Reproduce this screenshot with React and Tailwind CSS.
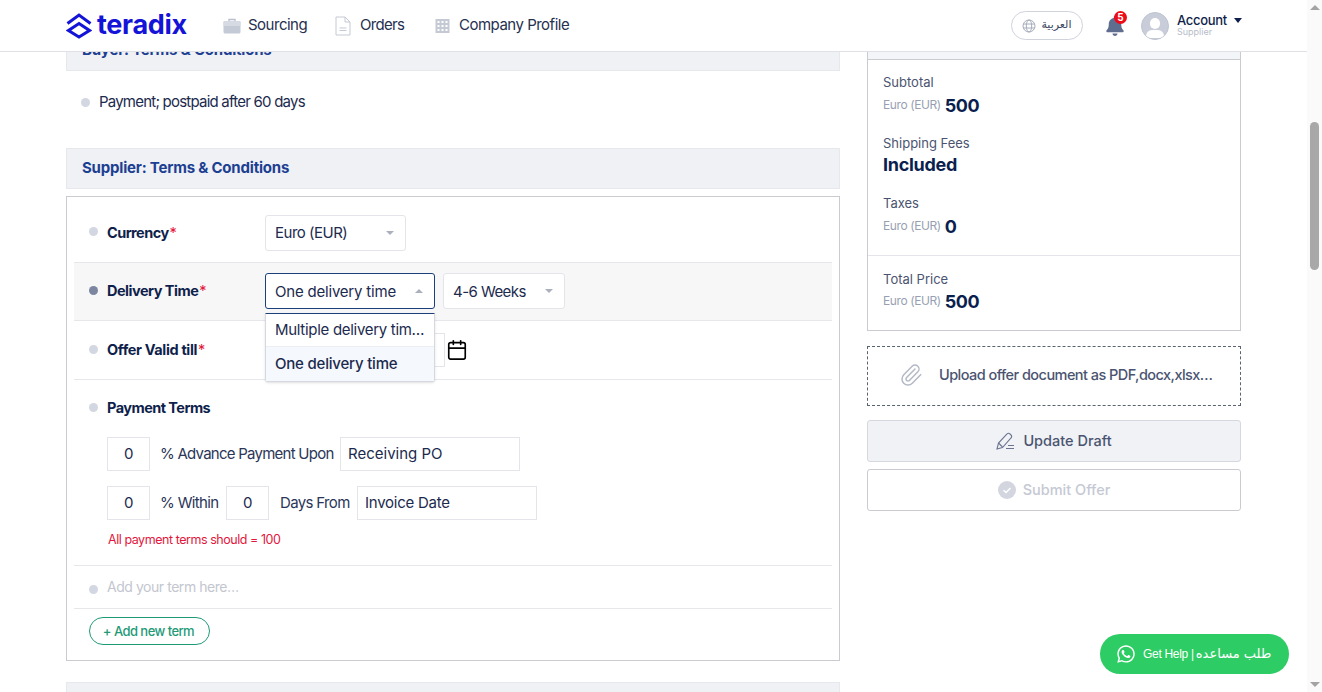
import { Calendar, Paperclip } from "lucide-react";
import { FaWhatsapp, FaBell } from "react-icons/fa";

const font = "font-['Inter','Noto_Sans',sans-serif]";

function Caret({ up }) {
  return (
    <span
      className={`w-0 h-0 border-x-[4px] border-x-transparent ${
        up ? "border-b-[4px] border-b-[#aab0bc]" : "border-t-[4px] border-t-[#aab0bc]"
      }`}
    />
  );
}

function Select({ value, className, up }) {
  return (
    <div className={`h-[36px] flex items-center justify-between pl-[9px] pr-[11px] bg-white rounded-[3px] border text-[15px] text-[#1c2a4e] ${className}`}>
      <span className="pt-[2px]">{value}</span>
      <Caret up={up} />
    </div>
  );
}

function Bullet({ active, className = "" }) {
  return <span className={`w-[9px] h-[9px] rounded-full shrink-0 ${active ? "bg-[#7d86a0]" : "bg-[#d3d7e1]"} ${className}`} />;
}

function Label({ children, required, className = "tracking-[-0.55px]" }) {
  return (
    <span className={`text-[14.5px] font-bold text-[#0f1f4b] ${className}`}>
      {children}
      {required && <span className="text-[#e3163c] font-normal ml-px">*</span>}
    </span>
  );
}

function Box({ value, className }) {
  return (
    <div className={`h-[34px] flex items-center pt-[1px] bg-white border border-[#e3e5ea] text-[15px] text-[#1c2a4e] ${className}`}>
      {value}
    </div>
  );
}

function PriceLine({ label, amount, tight }) {
  return (
    <div>
      <div className="text-[13px] leading-[18px] text-[#4a5470]">{label}</div>
      <div className={`flex items-center ${tight ? "h-[26px]" : "h-[28px]"}`}>
        <span className="text-[12px] text-[#989fb2] tracking-[-0.4px] mr-[4px]">Euro (EUR)</span>
        <span className="text-[18px] font-bold text-[#0b1f4f] tracking-[-0.5px]">{amount}</span>
      </div>
    </div>
  );
}

function Header() {
  return (
    <header className="absolute top-0 left-0 right-0 h-[52px] z-20 bg-white border-b border-[#dfe1e6] flex items-center pl-[66px] pr-[64px]">
      <svg width="26" height="26" viewBox="0 0 26 26" fill="none" stroke="#1414d8" strokeWidth="3" className="shrink-0">
        <path d="M1.500 10.500 13 2 24.500 10.500" />
        <path d="M13 10.500 23.500 17.500 13 24 2.500 17.500Z" />
      </svg>
      <span className="ml-[5px] text-[27px] leading-none font-bold text-[#1414d8] tracking-[-0.3px] w-[126px] -mt-[2px]">teradix</span>
      <nav className="flex items-center text-[15px] text-[#26304f] tracking-[-0.5px]">
        <svg width="18" height="16" viewBox="0 0 18 16" className="mr-[7px]">
          <path d="M6 3V1.500h6V3" fill="none" stroke="#b9bfcc" strokeWidth="1.400" />
          <rect x="0.500" y="3" width="17" height="12.500" rx="1.500" fill="#c4cad6" />
          <rect x="0.500" y="3" width="17" height="5" rx="1" fill="#d6dae3" />
        </svg>
        <span className="w-[87px]">Sourcing</span>
        <svg width="16" height="20" viewBox="0 0 16 20" fill="none" stroke="#c4c9d4" className="mr-[9px]">
          <path d="M1 1h9l5 5v13H1z" />
          <path d="M10 1v5h5M4.500 12h7M4.500 14.500h7" />
        </svg>
        <span className="w-[75px] tracking-[-0.7px]">Orders</span>
        <svg width="15" height="14" viewBox="0 0 15 14" fill="#c4c9d4" className="mr-[9px]">
          <path d="M0.500 0h14v14H0.500zM2.500 2v2h2V2zM6.500 2v2h2V2zM10.500 2v2h2V2zM2.500 6v2h2V6zM6.500 6v2h2V6zM10.500 6v2h2V6zM2.500 10v2h2v-2zM6.500 10v2h2v-2zM10.500 10v2h2v-2z" fillRule="evenodd" />
        </svg>
        <span>Company Profile</span>
      </nav>
      <div className="ml-auto flex items-center">
        <div className="w-[72px] h-[29px] rounded-full border border-[#cfd3dc] flex items-center justify-center gap-[5px] text-[12px] text-[#3b4560]">
          <svg width="14" height="14" viewBox="0 0 14 14" fill="none" stroke="#a5acbb">
            <circle cx="7" cy="7" r="6" />
            <ellipse cx="7" cy="7" rx="2.700" ry="6" />
            <path d="M1 5h12M1 9h12" />
          </svg>
          <span dir="rtl" className="font-['DejaVu_Sans',sans-serif] text-[11px]">العربية</span>
        </div>
        <div className="relative ml-[22px] w-[20px] h-[20px]">
          <FaBell className="text-[#5f6d8e] w-[20px] h-[20px]" />
          <span className="absolute -top-[5px] left-[9px] w-[13px] h-[13px] rounded-full bg-[#ec0b17] text-white text-[10px] font-bold leading-[13px] text-center">5</span>
        </div>
        <div className="ml-[16px] w-[28px] h-[28px] rounded-full bg-[#c9cdd9] border border-[#bfc4d2] overflow-hidden flex flex-col items-center">
          <span className="w-[10px] h-[11px] mt-[5px] rounded-full bg-white" />
          <span className="w-[18px] h-[8px] mt-px rounded-t-[6px] bg-white" />
        </div>
        <div className="ml-[8px] w-[66px] -mt-[2px]">
          <div className="flex items-center text-[13px] leading-[14px] font-medium text-[#0f1f4b] tracking-[-0.3px]">
            Account
            <span className="ml-[7px] w-0 h-0 border-x-[4px] border-x-transparent border-t-[5px] border-t-[#0f1f4b]" />
          </div>
          <div className="text-[9px] leading-[9px] text-[#b7bcc9]">Supplier</div>
        </div>
      </div>
    </header>
  );
}

function SectionBar({ children, className = "" }) {
  return (
    <div className={`h-[41px] bg-[#eff1f5] border border-[#e6e8ee] flex items-center pl-[15px] text-[15px] font-bold text-[#1d3f92] tracking-[-0.2px] ${className}`}>
      {children}
    </div>
  );
}

function Terms() {
  return (
    <div className="w-[774px]">
      <SectionBar>Buyer: Terms &amp; Conditions</SectionBar>
      <div className="h-[77px] flex items-center pl-[15px] gap-[9px] text-[15px] text-[#1c2a4e] tracking-[-0.78px] pb-[15px]">
        <Bullet />
        Payment; postpaid after 60 days
      </div>
      <SectionBar>Supplier: Terms &amp; Conditions</SectionBar>

      <div className="mt-[7px] h-[465px] border border-[#c9cbd1] px-[7px] bg-white">
        <div className="h-[65px] pt-[6px] flex items-center pl-[15px]">
          <Bullet className="mr-[9px] mb-[2px]" />
          <div className="w-[158px] pb-[2px]"><Label required>Currency</Label></div>
          <Select value={<span className="tracking-[-0.5px]">Euro (EUR)</span>} className="w-[141px] border-[#e3e5ea]" />
        </div>

        <div className="h-[59px] pb-px flex items-center pl-[15px] bg-[#f7f7f8] border-y border-[#e6e7eb]">
          <Bullet active className="mr-[9px] mb-[2px]" />
          <div className="w-[158px] pb-[2px]"><Label required className="tracking-[-0.5px]">Delivery Time</Label></div>
          <div className="relative">
            <Select value={<span className="tracking-[-0.2px]">One delivery time</span>} up className="w-[170px] border-[#1d3f7a]" />
            <div className="absolute z-10 top-[40px] left-0 w-[170px] h-[69px] bg-white border border-[#d5d8df] border-t-[#1d3f7a] rounded-b-[3px] shadow-sm text-[15px] text-[#1c2a4e]">
              <div className="h-[33px] pl-[9px] flex items-center border-b border-[#eceef2] whitespace-nowrap tracking-[-0.3px]">Multiple delivery tim…</div>
              <div className="h-[34px] pl-[9px] pt-[1px] flex items-center bg-[#f5f8fc] font-medium tracking-[-0.2px]">One delivery time</div>
            </div>
          </div>
          <Select value={<span className="tracking-[-0.55px]">4-6 Weeks</span>} className="w-[122px] ml-[8px] border-[#e3e5ea]" />
        </div>

        <div className="h-[59px] flex items-center pl-[15px] border-b border-[#e6e7eb]">
          <Bullet className="mr-[9px] mb-[2px]" />
          <div className="w-[158px] pb-[2px]"><Label required className="tracking-[-0.35px]">Offer Valid till</Label></div>
          <Box value="" className="w-[180px]" />
          <Calendar size={22} strokeWidth={1.8} className="text-black ml-px" />
        </div>

        <div className="h-[186px] pl-[15px] border-b border-[#e6e7eb]">
          <div className="h-[55px] flex items-center">
            <Bullet className="mr-[9px]" />
            <Label>Payment Terms</Label>
          </div>
          <div className="pl-[18px] pt-[2px] text-[15px] text-[#2b3658] tracking-[-0.65px] whitespace-nowrap">
            <div className="flex items-center">
              <Box value="0" className="w-[43px] justify-center" />
              <span className="ml-[10px] w-[180px] tracking-[-0.75px]">% Advance Payment Upon</span>
              <Box value="Receiving PO" className="w-[180px] pl-[7px] tracking-normal" />
            </div>
            <div className="flex items-center mt-[15px]">
              <Box value="0" className="w-[43px] justify-center" />
              <span className="ml-[10px] w-[66px]">% Within</span>
              <Box value="0" className="w-[43px] justify-center" />
              <span className="ml-[11px] w-[77px]">Days From</span>
              <Box value="Invoice Date" className="w-[180px] pl-[7px] tracking-[-0.25px]" />
            </div>
            <div className="mt-[11px] pl-px text-[12.5px] leading-[18px] text-[#e3163c] tracking-[-0.45px]">All payment terms should = 100</div>
          </div>
        </div>

        <div className="h-[43px] pb-[2px] flex items-center pl-[15px] border-b border-[#e6e7eb]">
          <Bullet className="mr-[9px] mt-[6px]" />
          <span className="text-[14px] text-[#c3c6cf] tracking-[-0.45px]">Add your term here…</span>
        </div>

        <button className="mt-[8px] ml-[15px] w-[121px] h-[28px] pt-px pr-[2px] rounded-full border border-[#1f9a78] text-[13px] font-medium text-[#1f9a78] tracking-[-0.55px]">
          + Add new term
        </button>
      </div>

      <SectionBar className="mt-[21px]" />
    </div>
  );
}

function Summary() {
  return (
    <div className="w-[374px] ml-[27px]">
      <div className="h-[301px] border border-[#c9cbd1] bg-white">
        <div className="h-[29px] bg-[#f3f5f9] border-b border-[#c9cbd1]" />
        <div className="h-[196px] px-[15px] pt-[13px] border-b border-[#e3e5ea]">
          <PriceLine label="Subtotal" amount="500" />
          <div className="text-[13px] leading-[18px] text-[#4a5470] mt-[15px]">Shipping Fees</div>
          <div className="text-[18px] leading-[26px] font-bold text-[#0b1f4f] tracking-[-0.3px]">Included</div>
          <div className="mt-[16px]"><PriceLine label="Taxes" amount="0" /></div>
        </div>
        <div className="px-[15px] pt-[14px]">
          <PriceLine label="Total Price" amount="500" tight />
        </div>
      </div>

      <div className="mt-[15px] h-[60px] pb-[2px] border border-dashed border-[#5b6270] flex items-center pl-[31px] text-[14.500px] font-medium text-[#4a5470] tracking-[-0.55px]">
        <Paperclip size={24} strokeWidth={1.5} className="text-[#b4b9c6] mr-[16px]" />
        <span className="whitespace-nowrap">Upload offer document as PDF,docx,xlsx…</span>
      </div>

      <button className="mt-[14px] w-full h-[42px] rounded-[3px] bg-[#f0f2f6] border border-[#d5d8df] flex items-center justify-center gap-[7px] text-[14.500px] font-medium text-[#4a5470]">
        <svg width="20" height="18" viewBox="0 0 20 18" fill="none" stroke="#6c7590" strokeWidth="1.100">
          <path d="M1 17 2.500 11 11 2a2 2 0 0 1 3 0l1 1a2 2 0 0 1 0 3l-8.500 9.500z" />
          <path d="M2.500 11 6.500 15M10 16.500h8M12 13.500h6" />
        </svg>
        Update Draft
      </button>
      <button className="mt-[7px] w-full h-[42px] rounded-[3px] bg-white border border-[#c9cbd1] flex items-center justify-center gap-[7px] text-[14.500px] font-medium text-[#c5c9d4]">
        <svg width="18" height="18" viewBox="0 0 18 18">
          <circle cx="9" cy="9" r="9" fill="#d3d6df" />
          <path d="M5.500 9.200 8 11.500 12.500 7" fill="none" stroke="#fff" strokeWidth="1.500" />
        </svg>
        Submit Offer
      </button>
    </div>
  );
}

function Scrollbar() {
  return (
    <div className="w-[15px] shrink-0 bg-[#fafafa] flex flex-col items-center justify-between py-[5px] relative">
      <span className="w-0 h-0 border-x-[5px] border-x-transparent border-b-[5px] border-b-[#a3a3a3]" />
      <span className="absolute top-[122px] left-[3px] w-[9px] h-[148px] rounded-full bg-[#a8a8a8]" />
      <span className="w-0 h-0 border-x-[5px] border-x-transparent border-t-[5px] border-t-[#a3a3a3]" />
    </div>
  );
}

export default function App() {
  return (
    <div className={`${font} relative w-full h-[692px] overflow-hidden flex bg-white`}>
      <div className="relative flex-1 overflow-hidden">
        <Header />
        <main className="flex items-start pl-[66px] pt-[30px]">
          <Terms />
          <Summary />
        </main>
        <button className="absolute z-30 left-[1100px] top-[634px] w-[189px] h-[40px] rounded-full bg-[#2ecc64] text-white flex items-center pl-[16px] text-[12px] font-['Liberation_Sans',sans-serif]">
          <FaWhatsapp className="w-[20px] h-[20px] mr-[7px]" />
          <span className="tracking-[-0.3px]">Get Help | </span>
          <span dir="rtl" className="ml-[2px] text-[13px] font-['DejaVu_Sans',sans-serif]">طلب مساعده</span>
        </button>
      </div>
      <Scrollbar />
    </div>
  );
}
